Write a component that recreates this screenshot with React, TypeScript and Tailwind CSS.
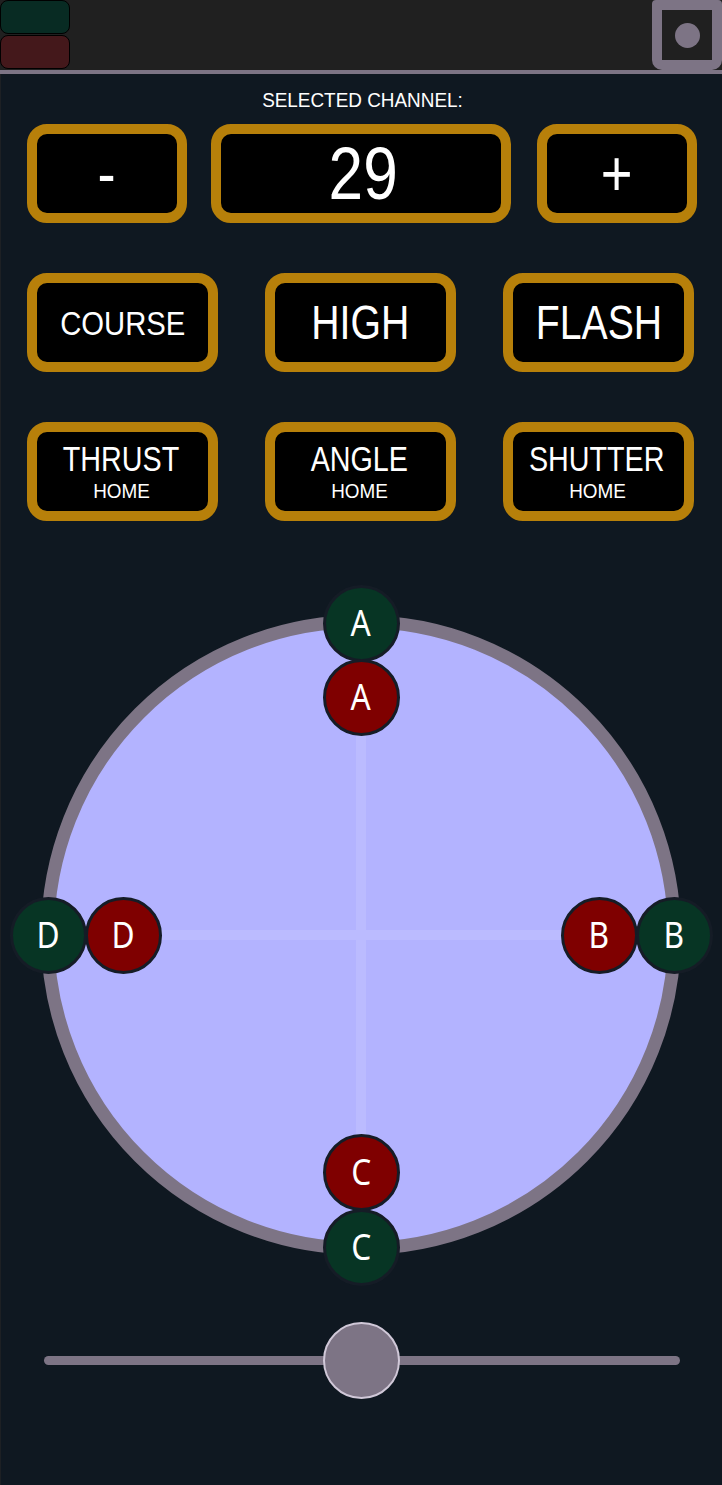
import React from "react";

type Node = { label: string; dx: number; dy: number; tone: "green" | "red" };

const nodes: Node[] = [
  { label: "A", dx: 0, dy: -312, tone: "green" },
  { label: "A", dx: 0, dy: -238, tone: "red" },
  { label: "B", dx: 238, dy: 0, tone: "red" },
  { label: "B", dx: 313, dy: 0, tone: "green" },
  { label: "C", dx: 0, dy: 237, tone: "red" },
  { label: "C", dx: 0, dy: 312, tone: "green" },
  { label: "D", dx: -238, dy: 0, tone: "red" },
  { label: "D", dx: -313, dy: 0, tone: "green" },
];

// gold framed key used by every control button
const Key = ({
  className,
  children,
}: {
  className: string;
  children: React.ReactNode;
}) => (
  <div
    className={`flex flex-col items-center justify-center rounded-[20px] border-[10px] border-[#b7800a] bg-black text-white ${className}`}
  >
    {children}
  </div>
);

const App = () => {
  return (
    <div className="flex h-[1485px] w-[722px] flex-col overflow-hidden bg-[#0f1821] font-['Liberation_Sans',sans-serif]">
      {/* Top bar */}
      <div className="flex h-[74px] shrink-0 justify-between border-b-4 border-[#7d7485] bg-[#202020]">
        <div className="flex w-[70px] flex-col gap-px">
          <div className="h-[34px] rounded-[8px] border border-black bg-[#082b23]" />
          <div className="h-[34px] rounded-[8px] border border-black bg-[#44181b]" />
        </div>
        <div className="flex h-[70px] w-[70px] items-center justify-center rounded-b-[10px] rounded-t-[4px] border-[10px] border-[#7d7485] bg-[#202020]">
          <div className="h-[25px] w-[25px] rounded-full bg-[#7d7485]" />
        </div>
      </div>

      {/* Main panel */}
      <div className="flex flex-1 flex-col border-l border-[#1d2024]">
        <div className="mt-[14px] text-center text-[21px] leading-[24px] text-white">
          <span className="inline-block translate-x-[1px] scale-x-[0.9]">SELECTED CHANNEL:</span>
        </div>

        <div className="mt-[12px] flex gap-[24px] pl-[26px]">
          <Key className="h-[99px] w-[160px] text-[64px] leading-none">
            <span className="inline-block scale-x-[0.85]">-</span>
          </Key>
          <Key className="h-[99px] w-[300px] text-[74px] leading-none">
            <span className="inline-block translate-x-[2px] scale-x-[0.84]">29</span>
          </Key>
          <Key className="ml-[2px] h-[99px] w-[160px] text-[64px] leading-none">
            <span className="inline-block scale-x-[0.85]">+</span>
          </Key>
        </div>

        <div className="mt-[50px] flex gap-[47px] pl-[26px]">
          <Key className="h-[99px] w-[191px] text-[34px] leading-none">
            <span className="inline-block scale-x-[0.86]">COURSE</span>
          </Key>
          <Key className="h-[99px] w-[191px] text-[49px] leading-none">
            <span className="inline-block scale-x-[0.8]">HIGH</span>
          </Key>
          <Key className="h-[99px] w-[191px] text-[49px] leading-none">
            <span className="inline-block scale-x-[0.8]">FLASH</span>
          </Key>
        </div>

        <div className="mt-[50px] flex gap-[47px] pl-[26px]">
          {["THRUST", "ANGLE", "SHUTTER"].map((t) => (
            <Key key={t} className="h-[99px] w-[191px] gap-[7px] pt-[2px] pr-[3px]">
              <span className="inline-block scale-x-[0.82] text-[35px] leading-[30px]">{t}</span>
              <span className="inline-block scale-x-[0.9] text-[21px] leading-[20px]">HOME</span>
            </Key>
          ))}
        </div>

        {/* Joystick */}
        <div className="relative mt-[94px] ml-[40px] h-[640px] w-[640px]">
          <div className="absolute inset-0 overflow-hidden rounded-full border-[13px] border-[#7d7485] bg-[#b3b3ff]">
            <div className="absolute left-1/2 top-0 h-full w-[10px] -translate-x-1/2 bg-[#bbbbff]" />
            <div className="absolute top-1/2 left-0 h-[10px] w-full -translate-y-1/2 bg-[#bbbbff]" />
          </div>
          {nodes.map((n, i) => (
            <div
              key={i}
              className={`absolute flex h-[77px] w-[77px] items-center justify-center rounded-full border-[3px] border-[#151c26] font-['Noto_Sans',sans-serif] text-[36px] leading-none text-white ${
                n.tone === "green" ? "bg-[#073524]" : "bg-[#7f0000]"
              }`}
              style={{
                left: 320 + n.dx - 38.5,
                top: 320 + n.dy - 38.5,
              }}
            >
              <span className="inline-block scale-x-[0.88]">{n.label}</span>
            </div>
          ))}
        </div>

        {/* Slider */}
        <div className="relative mt-[67px] ml-[43px] flex h-[77px] w-[636px] items-center">
          <div className="h-[9px] w-full rounded-full bg-[#7d7485]" />
          <div className="absolute left-[279px] top-0 h-[77px] w-[77px] rounded-full border-2 border-[#d0c8d8] bg-[#7d7485]" />
        </div>
      </div>
    </div>
  );
};

export default App;
